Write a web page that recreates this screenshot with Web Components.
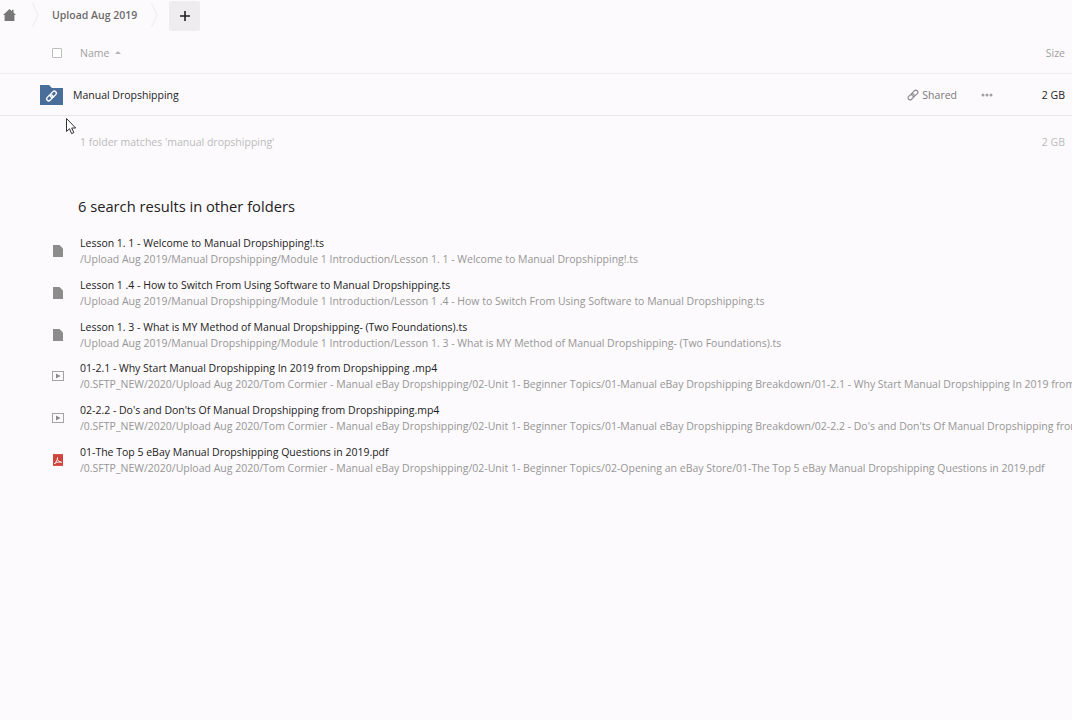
<!DOCTYPE html>
<html>
<head>
<meta charset="utf-8">
<title>Files</title>
<style>
  html, body { margin: 0; height: 100%; overflow: hidden; background: #fcfafc; }
  body { font-family: "Open Sans", sans-serif; font-size: 10.5px; color: #111; }
</style>
</head>
<body>
<file-breadcrumb label="Upload Aug 2019"></file-breadcrumb>
<file-header></file-header>
<folder-row name="Manual Dropshipping" size="2 GB"></folder-row>
<file-summary text="1 folder matches 'manual dropshipping'" size="2 GB"></file-summary>
<results-title>6 search results in other folders</results-title>
<search-results></search-results>
<mouse-cursor></mouse-cursor>

<script>
  const ICONS = {
    file: `<svg width="10" height="12" viewBox="0 0 10 12"><path d="M0 0H6.5L10 3.5V12H0Z" fill="#8c8c8c"/></svg>`,
    video: `<svg width="12" height="10" viewBox="0 0 12 10"><rect x=".5" y=".5" width="11" height="9" fill="none" stroke="#a3a3a3"/><path d="M4 2.5L8.5 5L4 7.5Z" fill="#8a8a8a"/></svg>`,
    pdf: `<svg width="10" height="12" viewBox="0 0 11 13"><rect width="11" height="13" fill="#d0443e"/><path d="M1.5 10.5C3.5 9.5 5 6 5 3.5M5 6C6 8 7.5 9 9.5 9C8 8.3 4.5 8.5 1.5 10.5" fill="none" stroke="#fff" stroke-width="1"/></svg>`
  };

  class FileBreadcrumb extends HTMLElement {
    connectedCallback() {
      const root = this.attachShadow({ mode: 'open' });
      root.innerHTML = `<style>
        :host { display: flex; align-items: center; height: 30px; }
        .home { display: flex; margin-left: 3px; width: 14px; }
        .sep { display: flex; margin-left: 15px; }
        .label { margin-left: 13px; font-weight: 600; color: #6b6b6b; width: 86px; white-space: nowrap; }
        .sep2 { margin-left: 13px; }
        .add { align-self: flex-start; display: flex; align-items: center; justify-content: center; width: 31px; height: 30px; margin: 1px 0 0 11px; background: #eeecee; border-radius: 2px; }
      </style>
      <span class="home"><svg width="13" height="12" viewBox="0 0 13 12"><path d="M6.5 0L9 2.2V.8H10.5V3.6L13 6H11.4V12H1.6V6H0Z" fill="#777"/></svg></span>
      <span class="sep"><svg width="7" height="30" viewBox="0 0 7 30"><path d="M.5 3L6 15L.5 27" fill="none" stroke="#ececec"/></svg></span>
      <span class="label">${this.getAttribute('label')}</span>
      <span class="sep sep2"><svg width="7" height="30" viewBox="0 0 7 30"><path d="M.5 3L6 15L.5 27" fill="none" stroke="#ececec"/></svg></span>
      <span class="add"><svg width="10" height="10" viewBox="0 0 10 10"><path d="M5 0V10M0 5H10" stroke="#222" stroke-width="1.6"/></svg></span>`;
    }
  }

  class FileHeader extends HTMLElement {
    connectedCallback() {
      const root = this.attachShadow({ mode: 'open' });
      root.innerHTML = `<style>
        :host { display: flex; align-items: center; height: 41px; padding: 2px 7px 0 52px; border-bottom: 1px solid #eeecee; color: #a0a0a0; }
        .check { width: 8px; height: 8px; border: 1px solid #bdbdbd; background: #fff; border-radius: 1px; }
        .name { margin-left: 18px; }
        .arrow { margin-left: 6px; width: 0; height: 0; border: 3px solid transparent; border-top: 0; border-bottom: 3px solid #b5b5b5; }
        .size { margin-left: auto; }
      </style>
      <span class="check"></span><span class="name">Name</span><span class="arrow"></span><span class="size">Size</span>`;
    }
  }

  class FolderRow extends HTMLElement {
    connectedCallback() {
      const root = this.attachShadow({ mode: 'open' });
      root.innerHTML = `<style>
        :host { display: flex; align-items: center; height: 41px; padding: 0 7px 0 40px; border-bottom: 1px solid #e9e7e9; }
        .icon { display: flex; }
        .name { margin-left: 10px; color: #222; }
        .shared { margin-left: auto; display: flex; align-items: center; gap: 3px; color: #777; }
        .more { display: flex; margin-left: 24px; }
        .size { width: 72px; text-align: right; color: #222; }
      </style>
      <span class="icon"><svg width="23" height="20" viewBox="0 0 23 20"><path d="M0 0H9L12 3H23V20H0Z" fill="#4a6e9a"/><g fill="none" stroke="#fff" stroke-width="1.3" transform="rotate(-45 11.5 11)"><rect x="5.5" y="9" width="7" height="4" rx="2"/><rect x="10.5" y="9" width="7" height="4" rx="2"/></g></svg></span>
      <span class="name">${this.getAttribute('name')}</span>
      <span class="shared"><svg width="12" height="12" viewBox="0 0 12 12"><g fill="none" stroke="#8a8a8a" stroke-width="1.1" transform="rotate(-45 6 6)"><rect x="0" y="4" width="7" height="4" rx="2"/><rect x="5" y="4" width="7" height="4" rx="2"/></g></svg>Shared</span>
      <span class="more"><svg width="12" height="4" viewBox="0 0 12 4"><circle cx="2" cy="2" r="1.5" fill="#a0a0a0"/><circle cx="6" cy="2" r="1.5" fill="#a0a0a0"/><circle cx="10" cy="2" r="1.5" fill="#a0a0a0"/></svg></span>
      <span class="size">${this.getAttribute('size')}</span>`;
    }
  }

  class FileSummary extends HTMLElement {
    connectedCallback() {
      const root = this.attachShadow({ mode: 'open' });
      root.innerHTML = `<style>
        :host { display: flex; justify-content: space-between; padding: 19px 7px 0 80px; height: 36px; color: #bbb; }
      </style>
      <span>${this.getAttribute('text')}</span><span>${this.getAttribute('size')}</span>`;
    }
  }

  class ResultsTitle extends HTMLElement {
    connectedCallback() {
      const root = this.attachShadow({ mode: 'open' });
      root.innerHTML = `<style>
        :host { display: block; margin: 25px 0 0 78px; height: 34.4px; font-size: 14.7px; line-height: 20px; color: #222; }
      </style><slot></slot>`;
    }
  }

  class ResultRow extends HTMLElement {
    connectedCallback() {
      const root = this.attachShadow({ mode: 'open' });
      root.innerHTML = `<style>
        :host { display: flex; align-items: center; height: 41.7px; white-space: nowrap; overflow: hidden; }
        .icon { flex: none; display: flex; justify-content: center; width: 12px; margin: 0 16px 0 52px; }
        .text { line-height: 16px; }
        .title { color: #222; }
        .path { color: #969696; }
      </style>
      <span class="icon">${ICONS[this.getAttribute('icon')]}</span>
      <div class="text"><div class="title">${this.getAttribute('title')}</div><div class="path">${this.getAttribute('path')}</div></div>`;
    }
  }

  const RESULTS = [
    ['file', 'Lesson 1. 1 - Welcome to Manual Dropshipping!.ts', '/Upload Aug 2019/Manual Dropshipping/Module 1 Introduction/Lesson 1. 1 - Welcome to Manual Dropshipping!.ts'],
    ['file', 'Lesson 1 .4 - How to Switch From Using Software to Manual Dropshipping.ts', '/Upload Aug 2019/Manual Dropshipping/Module 1 Introduction/Lesson 1 .4 - How to Switch From Using Software to Manual Dropshipping.ts'],
    ['file', 'Lesson 1. 3 - What is MY Method of Manual Dropshipping- (Two Foundations).ts', '/Upload Aug 2019/Manual Dropshipping/Module 1 Introduction/Lesson 1. 3 - What is MY Method of Manual Dropshipping- (Two Foundations).ts'],
    ['video', '01-2.1 - Why Start Manual Dropshipping In 2019 from Dropshipping .mp4', '/0.SFTP_NEW/2020/Upload Aug 2020/Tom Cormier - Manual eBay Dropshipping/02-Unit 1- Beginner Topics/01-Manual eBay Dropshipping Breakdown/01-2.1 - Why Start Manual Dropshipping In 2019 from Dropshipping .mp4'],
    ['video', "02-2.2 - Do's and Don'ts Of Manual Dropshipping from Dropshipping.mp4", "/0.SFTP_NEW/2020/Upload Aug 2020/Tom Cormier - Manual eBay Dropshipping/02-Unit 1- Beginner Topics/01-Manual eBay Dropshipping Breakdown/02-2.2 - Do's and Don'ts Of Manual Dropshipping from Dropshipping.mp4"],
    ['pdf', '01-The Top 5 eBay Manual Dropshipping Questions in 2019.pdf', '/0.SFTP_NEW/2020/Upload Aug 2020/Tom Cormier - Manual eBay Dropshipping/02-Unit 1- Beginner Topics/02-Opening an eBay Store/01-The Top 5 eBay Manual Dropshipping Questions in 2019.pdf']
  ];

  class SearchResults extends HTMLElement {
    connectedCallback() {
      const root = this.attachShadow({ mode: 'open' });
      root.innerHTML = `<style>:host { display: block; }</style><slot></slot>`;
      RESULTS.forEach(([icon, title, path]) => {
        const row = document.createElement('result-row');
        row.setAttribute('icon', icon);
        row.setAttribute('title', title);
        row.setAttribute('path', path);
        this.appendChild(row);
      });
    }
  }

  class MouseCursor extends HTMLElement {
    connectedCallback() {
      const root = this.attachShadow({ mode: 'open' });
      root.innerHTML = `<style>:host { position: absolute; left: 66px; top: 118px; display: block; line-height: 0; }</style>
      <svg width="11" height="17" viewBox="0 0 11 17"><path d="M.5.5V13.5L3.5 10.7L5.6 15.6L7.8 14.6L5.7 10H9.7Z" fill="#fff" stroke="#333" stroke-width="1"/></svg>`;
    }
  }

  customElements.define('file-breadcrumb', FileBreadcrumb);
  customElements.define('file-header', FileHeader);
  customElements.define('folder-row', FolderRow);
  customElements.define('file-summary', FileSummary);
  customElements.define('results-title', ResultsTitle);
  customElements.define('result-row', ResultRow);
  customElements.define('search-results', SearchResults);
  customElements.define('mouse-cursor', MouseCursor);
</script>
</body>
</html>
